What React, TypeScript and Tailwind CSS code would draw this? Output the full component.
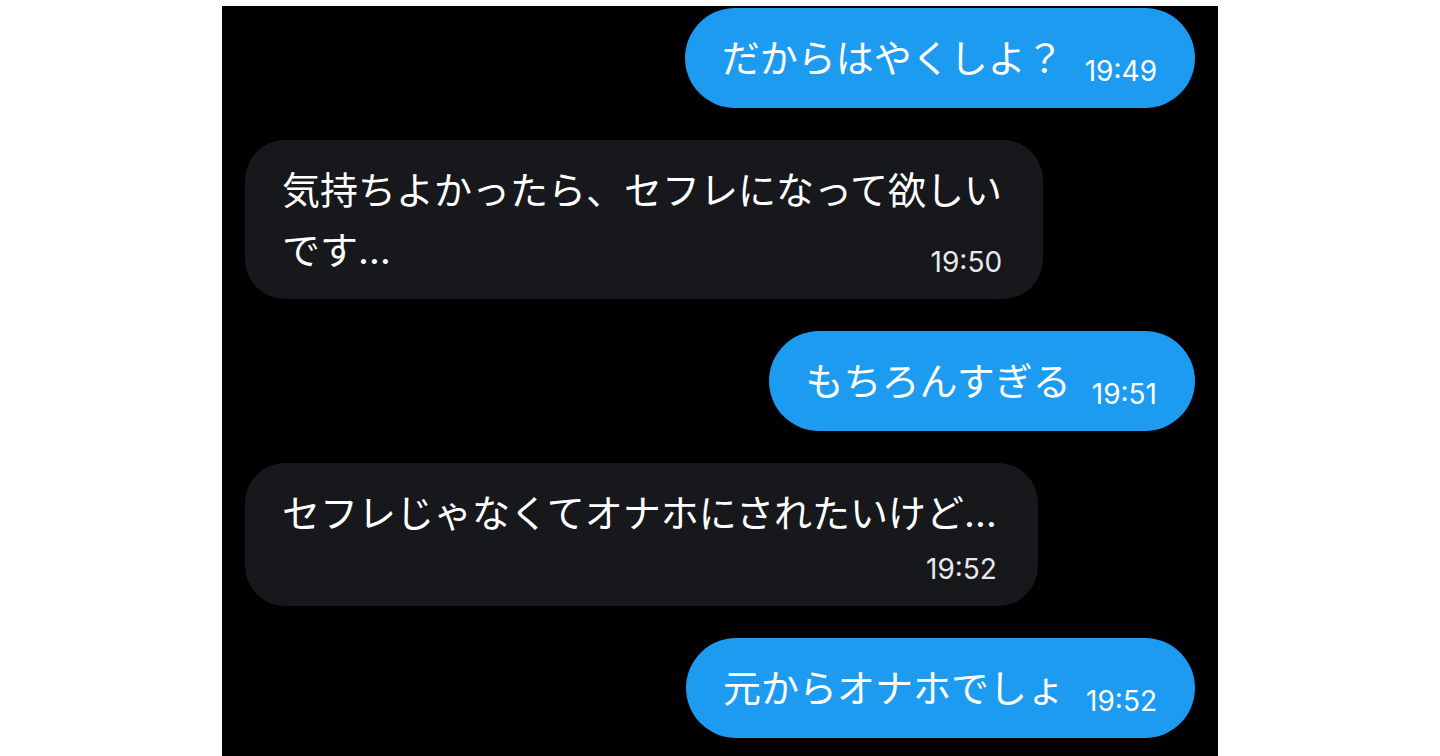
const messages = [
  { id: 1, mine: true, lines: ['だからはやくしよ？'], time: '19:49' },
  { id: 2, mine: false, lines: ['気持ちよかったら、セフレになって欲しい', 'です…'], time: '19:50', timeRow: false },
  { id: 3, mine: true, lines: ['もちろんすぎる'], time: '19:51' },
  { id: 4, mine: false, lines: ['セフレじゃなくてオナホにされたいけど…'], time: '19:52', timeRow: true },
  { id: 5, mine: true, lines: ['元からオナホでしょ'], time: '19:52' },
];

const font = "font-['Inter','Noto_Sans_CJK_JP',sans-serif]";

function Sent({ text, time }: { text: string; time: string }) {
  return (
    <div className="flex justify-end">
      <div className="flex items-end rounded-full bg-[#1d9bf0] pl-[37px] pr-[38px] py-5 text-white">
        <p className="text-[38px] leading-[60px] whitespace-nowrap">{text}</p>
        <span className="ml-[21px] mb-[3px] text-[28px] leading-[28px] whitespace-nowrap">{time}</span>
      </div>
    </div>
  );
}

function Received({ lines, time, timeRow }: { lines: string[]; time: string; timeRow?: boolean }) {
  const last = lines[lines.length - 1];
  const rest = lines.slice(0, -1);
  return (
    <div className="flex justify-start">
      <div className="rounded-[40px] bg-[#17181b] pl-[37px] pr-[41px] pt-5 pb-[19px] text-white">
        {rest.map((l) => (
          <p key={l} className="text-[38px] leading-[60px] whitespace-nowrap">{l}</p>
        ))}
        {timeRow ? (
          <>
            <p className="text-[38px] leading-[60px] whitespace-nowrap">{last}</p>
            <div className="flex justify-end mt-3 mb-1">
              <span className="text-[28px] leading-[28px] text-[#e7e9ea]">{time}</span>
            </div>
          </>
        ) : (
          <div className="flex items-end justify-between">
            <p className="text-[38px] leading-[60px] whitespace-nowrap">{last}</p>
            <span className="mb-1 text-[28px] leading-[28px] text-[#e7e9ea]">{time}</span>
          </div>
        )}
      </div>
    </div>
  );
}

export default function App() {
  return (
    <div className={`h-[756px] w-[1440px] overflow-hidden bg-white pt-[6px] ${font}`}>
      <div className="ml-[222px] h-full w-[996px] bg-black pl-[23px] pr-[23px] pt-[2px]">
        <div className="flex flex-col gap-8">
          {messages.map((m) =>
            m.mine ? (
              <Sent key={m.id} text={m.lines[0]} time={m.time} />
            ) : (
              <Received key={m.id} lines={m.lines} time={m.time} timeRow={m.timeRow} />
            )
          )}
        </div>
      </div>
    </div>
  );
}
